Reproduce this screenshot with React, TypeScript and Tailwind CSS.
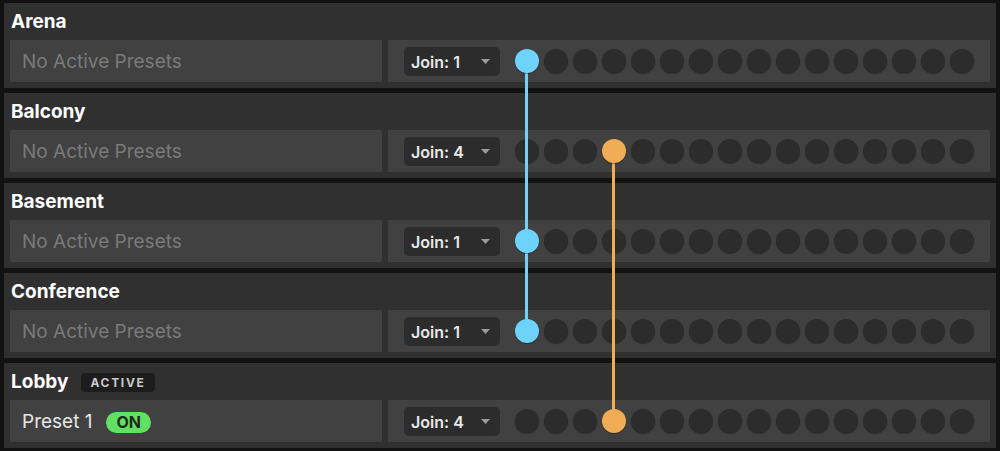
import React from "react";

type Zone = {
  name: string;
  active?: boolean;
  presets: { name: string; on: boolean }[];
  join: number;
};

const ZONES: Zone[] = [
  { name: "Arena", presets: [], join: 1 },
  { name: "Balcony", presets: [], join: 4 },
  { name: "Basement", presets: [], join: 1 },
  { name: "Conference", presets: [], join: 1 },
  { name: "Lobby", active: true, presets: [{ name: "Preset 1", on: true }], join: 4 },
];

const GROUP_COLORS: Record<number, string> = {
  1: "bg-[#6dd3fa]",
  4: "bg-[#f0ad56]",
};

const SLOTS = 16;
const ROW_PITCH = 90; // card height 85 + gap 5
const DOT_PITCH = 29;

function JoinSelect({ value }: { value: number }) {
  return (
    <div className="flex h-[29px] w-[96px] shrink-0 items-center justify-between rounded-[5px] bg-[#2c2c2c] pl-[7px] pr-[10px]">
      <span className="pt-[1px] text-[16px] font-semibold text-[#e8e8e8]">Join: {value}</span>
      <svg width="9" height="5" viewBox="0 0 9 5">
        <path d="M0 0h9L4.5 5z" fill="#9a9a9a" />
      </svg>
    </div>
  );
}

function DotRow({ join }: { join: number }) {
  return (
    <div className="flex gap-[5px]">
      {Array.from({ length: SLOTS }).map((_, i) => {
        const lit = i === join - 1;
        return (
          <div
            key={i}
            className={`h-[24px] w-[24px] rounded-full shadow-[0_1px_1px_rgba(0,0,0,0.35)] ${
              lit ? `relative z-20 ${GROUP_COLORS[join]}` : "bg-[#2c2c2c]"
            }`}
          />
        );
      })}
    </div>
  );
}

function ZoneCard({ zone }: { zone: Zone }) {
  return (
    <div className="flex h-[85px] flex-col bg-[#303030] px-[6px] pb-[6px]">
      {/* header */}
      <div className="flex h-[37px] items-center gap-[13px] pl-[1px] pt-[2px]">
        <span className="text-[19px] font-bold text-white">{zone.name}</span>
        {zone.active && (
          <span className="flex h-[19px] items-center rounded-[4px] bg-[#1d1d1d] px-[9px] text-[12px] font-bold tracking-[0.14em] text-[#c9c9c9]">
            ACTIVE
          </span>
        )}
      </div>

      <div className="flex flex-1 gap-[6px]">
        {/* presets */}
        <div className="flex w-[372px] shrink-0 items-center gap-[14px] bg-[#414141] px-[12px] pt-[2px]">
          {zone.presets.length === 0 ? (
            <span className="text-[19px] text-[#7a7a7a]">No Active Presets</span>
          ) : (
            zone.presets.map((p) => (
              <React.Fragment key={p.name}>
                <span className="text-[19px] text-[#e6e6e6]">{p.name}</span>
                {p.on && (
                  <span className="flex h-[21px] items-center rounded-full bg-[#62e063] px-[10px] text-[16px] font-bold text-[#1f2a1f]">
                    ON
                  </span>
                )}
              </React.Fragment>
            ))
          )}
        </div>

        {/* join */}
        <div className="flex flex-1 items-center gap-[15px] bg-[#414141] px-[16px]">
          <JoinSelect value={zone.join} />
          <DotRow join={zone.join} />
        </div>
      </div>
    </div>
  );
}

export default function App() {
  // join groups: connect first and last zone that share a join number
  const groups = Object.keys(GROUP_COLORS).map(Number).map((j) => {
    const rows = ZONES.map((z, i) => (z.join === j ? i : -1)).filter((i) => i >= 0);
    return { join: j, first: rows[0], last: rows[rows.length - 1] };
  });

  return (
    <div
      className="h-[451px] w-[1000px] bg-[#121212] px-[4px] pt-[3px]"
      style={{ fontFamily: "Inter, 'Liberation Sans', sans-serif" }}
    >
      <div className="relative flex flex-col gap-[5px]">
        {ZONES.map((z) => (
          <ZoneCard key={z.name} zone={z} />
        ))}

        {groups.map((g) => (
          <div
            key={g.join}
            className={`absolute z-10 w-[3px] ${GROUP_COLORS[g.join]}`}
            style={{
              left: 521 + (g.join - 1) * DOT_PITCH,
              top: g.first * ROW_PITCH + 58,
              height: (g.last - g.first) * ROW_PITCH,
            }}
          />
        ))}
      </div>
    </div>
  );
}
